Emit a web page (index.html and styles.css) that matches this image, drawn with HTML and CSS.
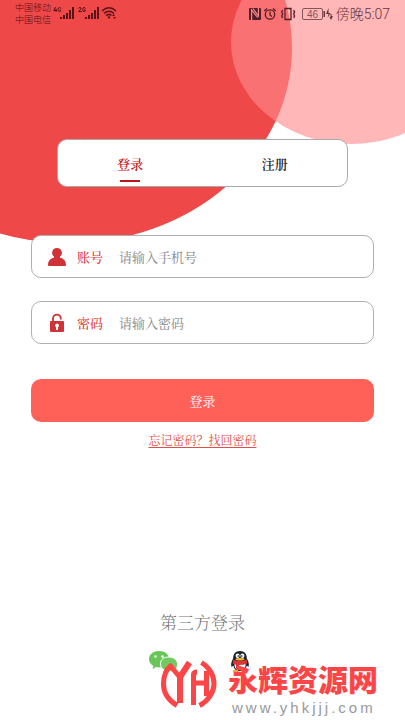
FILE: index.html
```html
<!DOCTYPE html>
<html lang="zh-CN">
<head>
<meta charset="utf-8">
<meta name="viewport" content="width=device-width, initial-scale=1">
<title>登录</title>
<link rel="stylesheet" href="styles.css">
</head>
<body>
<svg class="backdrop" viewBox="0 0 405 250" aria-hidden="true">
  <ellipse cx="69" cy="48" rx="223" ry="195" fill="#ef4848"/>
  <ellipse cx="351" cy="42" rx="120" ry="102" fill="#ff8a8d" fill-opacity=".62"/>
</svg>

<header class="status">
  <div class="carriers"><span>中国移动</span><span>中国电信</span></div>
  <svg class="signals" width="66" height="16" viewBox="0 0 66 16" aria-hidden="true">
    <g fill="none" stroke="#5b1216" stroke-width="1">
      <path d="M2.500 1L.8 4.500H4M3 2.500V6M7.800 2.500Q7.500 1.500 6.500 1.500Q5 1.500 5 3.500Q5 5.600 6.500 5.600Q7.700 5.600 7.700 4H6.500"/>
      <path d="M25.500 2.500Q25.700 1.500 27 1.500Q28.500 1.700 28 3L25.600 5.500H29M32.500 2.500Q32 1.500 31 1.500Q29.800 1.500 29.800 3.500Q29.800 5.600 31 5.600Q32.400 5.600 32.400 4H31"/>
    </g>
    <path fill="#5b1216" d="M7 11h2v2H7zM10 9h2v4h-2zM13 7h2v6h-2zM16 4h2v9h-2zM19 1h2v12h-2zM32 11h2v2h-2zM35 9h2v4h-2zM38 7h2v6h-2zM41 4h2v9h-2zM44 1h2v12h-2z"/>
    <g fill="none" stroke="#5b1216" stroke-width="1.500">
      <path d="M49 5Q56 -1.500 63 5M51 7.500Q56 3 61 7.500M53 9.700Q56 7.200 58.500 9.500"/>
    </g>
    <path fill="#5b1216" d="M54.500 11L56 10l1.500 1L56 13zM59 10l1.500-2 1.500 2zM60 11h3l-1.500 2z"/>
  </svg>
  <span class="spacer"></span>
  <svg class="indicators" width="87" height="14" viewBox="0 0 87 14" aria-hidden="true">
    <g transform="translate(3 0)">
      <path fill="#551e24" d="M1 1h10q1 0 1 1v10q0 1-1 1H1q-1 0-1-1V2q0-1 1-1z"/>
      <path fill="none" stroke="#f28a8c" stroke-width="1.200" d="M2.600 13V3L8.600 10.500M4 1.500L9.400 9V1"/>
    </g>
    <g fill="none" stroke="#551e24" stroke-width="1.300">
      <circle cx="24" cy="7.500" r="4.700"/>
      <path d="M24 4.500V8l2 1.500M18.300 4l2.800-2.600M27 1.400L29.800 4M39 1.500h6v11h-6zM36.700 3l-1 2 1 2-1 2 1 2M47.600 3l1 2-1 2 1 2-1 2"/>
    </g>
    <rect x="56.500" y="1.500" width="20" height="11" rx="1.500" fill="none" stroke="#85535a"/>
    <path fill="#65343b" d="M77.500 4h1.500v6h-1.500zM82.500 1l-2.500 6h2.500l-1 4 3-5h-2zM84.500 7h1v2h1.500l-2 4-1.500-3h1z"/>
    <text x="66.500" y="11" text-anchor="middle" class="battery">46</text>
  </svg>
  <time class="clock">傍晚5:07</time>
</header>

<main class="page">
  <nav class="tabs">
    <button type="button" class="tab active">登录</button>
    <button type="button" class="tab">注册</button>
  </nav>
  <form class="form">
    <div class="field">
      <svg class="icon" width="20" height="20" viewBox="0 0 20 20" aria-hidden="true">
        <path fill="#cf3338" d="M10 1a4.800 4.800 0 0 1 3 8.600v1.200c3.500.7 6 3.200 6 7.200q0 1-1 1H2q-1 0-1-1c0-4 2.500-6.500 6-7.200V9.600A4.800 4.800 0 0 1 10 1z"/>
      </svg>
      <label for="phone">账号</label>
      <input id="phone" type="tel" placeholder="请输入手机号">
    </div>
    <div class="field">
      <svg class="icon" width="20" height="20" viewBox="0 0 20 20" aria-hidden="true">
        <path d="M6 9V5.500a3.900 3.900 0 0 1 7.800 0V6.500" fill="none" stroke="#cf3338" stroke-width="1.800"/>
        <path fill="#cf3338" fill-rule="evenodd" d="M4 8h12q1 0 1 1v9q0 1-1 1H4q-1 0-1-1V9q0-1 1-1zm6 2.500a2 2 0 0 0-1 3.700V17h2v-2.800a2 2 0 0 0-1-3.700z"/>
      </svg>
      <label for="password">密码</label>
      <input id="password" type="password" placeholder="请输入密码">
    </div>
    <button type="submit" class="submit">登录</button>
  </form>
  <a class="forgot" href="#">忘记密码？找回密码</a>
  <section class="third">
    <h2>第三方登录</h2>
    <div class="providers">
      <button type="button" aria-label="微信登录">
        <svg width="30" height="24" viewBox="0 0 30 24" aria-hidden="true">
          <path fill="#68c658" d="M11 1c6 0 10 3.500 10 8s-4 8.500-10 8.500c-1 0-2-.1-3-.4L4.500 19l.8-3.200C2.500 14.200 1 11.700 1 9c0-4.500 4.500-8 10-8z"/>
          <circle cx="7.500" cy="6.500" r="1.200" fill="#fff"/><circle cx="14.500" cy="6.500" r="1.200" fill="#fff"/>
          <path fill="#71c960" stroke="#fff" d="M21 7c4.800 0 8.500 3 8.500 7s-1.500 5-3 6l.5 2.500-3-1.500c-6 1.500-11.500-2-11.500-7S16 7 21 7z"/>
        </svg>
      </button>
      <button type="button" aria-label="QQ登录">
        <svg width="20" height="24" viewBox="0 0 20 24" aria-hidden="true">
          <path fill="#17232e" d="M10 1c4.500 0 7 3 6.800 7.500 1.500 2.500 2.700 5.500 1.700 8.500l-2-1.500c0 3-2.500 5.500-6.500 5.500s-6.500-2.500-6.500-5.500L1.500 17c-1-3 .2-6 1.700-8.500C3 4 5.500 1 10 1z"/>
          <ellipse cx="7.600" cy="5.800" rx="2" ry="2.300" fill="#fff"/><ellipse cx="12.400" cy="5.800" rx="2" ry="2.300" fill="#fff"/>
          <circle cx="8.200" cy="6" r=".8"/><circle cx="11.800" cy="6" r=".8"/>
          <ellipse cx="10" cy="9.300" rx="4.500" ry="1.200" fill="#f7b52c"/>
          <path fill="#fff" d="M4.500 13h11v3q-1 4-5.500 4t-5.500-4z"/>
          <path fill="#e03438" d="M3.300 9.800q6.700 2.500 13.400 0l.5 3.700q-3.500 1.500-8.200 1.500V18H6v-3.200q-2-.3-3.200-1.300z"/>
          <path fill="#f6b03b" d="M3 20q3-1 6 1-1 2-4 1.500-3-.5-2-2.500zM17 20q-3-1-6 1 1 2 4 1.500 3-.5 2-2.500z"/>
        </svg>
      </button>
    </div>
  </section>
</main>

<aside class="brand">
  <svg width="56" height="48" viewBox="0 0 56 48" aria-hidden="true">
    <g fill="none" stroke="#fb4547" stroke-width="5" stroke-linejoin="round">
      <path d="M16 45.500C7 40 2.500 32 2.500 24Q2.500 12 9.500 6L19 17.500"/>
      <path d="M28.500 2.500L19 17V43" stroke-width="6"/>
      <path d="M32.500 45V15Q32.500 12 36 12M32.500 23H46M45.500 11V36"/>
      <path d="M40.500 2.500C49 8 53 16 53 24S47 41 38.500 45.500"/>
    </g>
  </svg>
  <div class="brand-text">
    <strong>永辉资源网</strong>
    <span>www.yhkjjj.com</span>
  </div>
</aside>
</body>
</html>
```
FILE: styles.css
```css
* {
  box-sizing: border-box;
}

body {
  position: relative;
  min-height: 100vh;
  margin: 0;
  overflow-x: hidden;
  background: #fff;
  font-family: "Noto Serif CJK SC", "Noto Sans CJK SC", sans-serif;
}

button,
input {
  padding: 0;
  border: 0;
  background: none;
  font: inherit;
}

.backdrop {
  position: absolute;
  top: 0;
  left: 0;
  z-index: -1;
  width: 100%;
}

.status {
  display: flex;
  align-items: center;
  height: 27px;
  padding: 0 15px;
  color: #5b1216;
  font-family: "Noto Sans CJK SC", sans-serif;
}

.carriers {
  display: flex;
  flex-direction: column;
  font-size: 9px;
  font-weight: 300;
  line-height: 12px;
}

.signals {
  margin-left: 2px;
}

.spacer {
  flex: 1;
}

.battery {
  fill: #85535a;
  font-family: "Liberation Sans", sans-serif;
  font-size: 10px;
}

.clock {
  margin-left: 3px;
  color: #65343b;
  font-family: Roboto, "Noto Sans CJK SC", sans-serif;
  font-size: 14px;
  font-weight: 300;
  line-height: 20px;
}

.page {
  display: flex;
  flex-direction: column;
  padding: 112px 31px 0;
}

.tabs {
  display: flex;
  height: 48px;
  margin: 0 26px;
  border: 1px solid #aaa;
  border-radius: 10px;
  background: #fff;
}

.tab {
  position: relative;
  flex: 1;
  color: #222;
  font-size: 13px;
  font-weight: 600;
}

.tab.active {
  color: #c4211f;
}

.tab.active::after {
  position: absolute;
  bottom: 4px;
  left: calc(50% - 10px);
  width: 20px;
  height: 2px;
  background: #b71918;
  content: "";
}

.form {
  display: flex;
  flex-direction: column;
  gap: 23px;
  margin-top: 48px;
}

.field {
  display: flex;
  align-items: center;
  height: 43px;
  padding: 0 15px;
  border: 1px solid #b0b0b0;
  border-radius: 10px;
  background: #fff;
  font-size: 13px;
}

.field label {
  margin: 0 16px 0 10px;
  color: #e23a38;
  font-weight: 500;
}

.field input {
  flex: 1;
  min-width: 0;
  outline: 0;
}

.field input::placeholder {
  color: #858585;
  opacity: 1;
}

.submit {
  height: 43px;
  margin-top: 12px;
  border-radius: 10px;
  background: #ff6159;
  color: #fff;
  font-size: 13px;
}

.forgot {
  align-self: center;
  margin-top: 8px;
  color: #e0504b;
  font-size: 12px;
  line-height: 20px;
  text-underline-offset: 2px;
}

.third {
  margin-top: 160px;
  text-align: center;
}

.third h2 {
  margin: 0;
  color: #777;
  font-size: 17px;
  font-weight: 300;
  line-height: 24px;
}

.providers {
  display: flex;
  justify-content: center;
  gap: 52px;
  margin-top: 16px;
  padding-right: 8px;
}

.providers button {
  height: 24px;
}

.providers svg,
.brand svg {
  display: block;
}

.brand {
  position: absolute;
  right: 27px;
  bottom: 4px;
  display: flex;
  align-items: flex-start;
  gap: 11px;
}

.brand svg {
  margin-top: 4px;
}

.brand-text {
  display: flex;
  flex-direction: column;
  font-family: "Noto Sans CJK SC", sans-serif;
}

.brand-text strong {
  color: #fb4547;
  font-size: 30px;
  font-weight: 900;
  line-height: 44px;
}

.brand-text span {
  padding-left: 4px;
  color: #999;
  font-family: "Liberation Sans", sans-serif;
  font-size: 15px;
  letter-spacing: 3px;
  line-height: 16px;
}
```
